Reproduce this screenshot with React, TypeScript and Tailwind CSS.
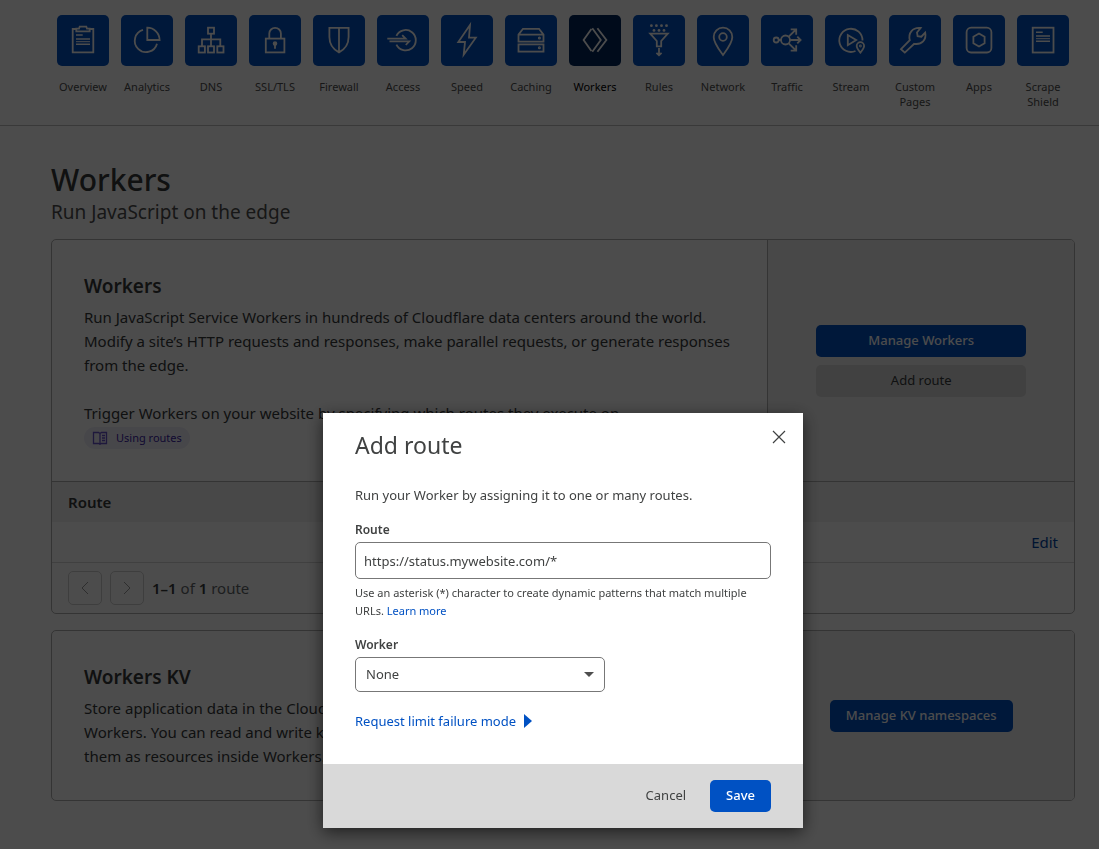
import React, { useState } from "react";

type NavItem = { label: string; icon: React.ReactNode; active?: boolean };

const navItems: NavItem[] = [
  {
    label: "Overview",
    icon: (
      <>
        <path d="M19 14H15.7V37.3H36.3V14H33" />
        <path d="M19.3 16.3V13.7H22L22.7 11.7H29.3L30 13.7H32.7V16.3Z" />
        <path d="M19 20H25.7M19 24H33M19 29.3H33" strokeWidth="1.6" />
        <path d="M19 26.7H33" strokeWidth="1" />
      </>
    ),
  },
  {
    label: "Analytics",
    icon: (
      <>
        <path d="M26.3 12.7V25H38.6A12.3 12.3 0 0 0 26.3 12.7Z" />
        <path d="M22 14.9A11.3 11.3 0 1 0 36 28.7" />
      </>
    ),
  },
  {
    label: "DNS",
    icon: (
      <>
        <rect x="23" y="12.7" width="6" height="6" />
        <path d="M26 18.7V31M17 31V24.3H35.3V31" />
        <rect x="13.7" y="31.3" width="6.2" height="6.2" />
        <rect x="23" y="31.3" width="6" height="6.2" />
        <rect x="32.3" y="31.3" width="6.2" height="6.2" />
      </>
    ),
  },
  {
    label: "SSL/TLS",
    icon: (
      <>
        <rect x="16.8" y="23.6" width="18.6" height="13.8" />
        <path d="M20.3 23.3V18.6A5.8 5.8 0 0 1 31.9 18.6V23.3" />
        <circle cx="26" cy="28.6" r="1.4" fill="currentColor" />
        <path d="M26 29V33.7" />
      </>
    ),
  },
  {
    label: "Firewall",
    icon: <path d="M16.4 12.8H35.6V22C35.6 29.5 31.5 34.5 26 37.4C20.5 34.5 16.4 29.5 16.4 22ZM26 12.8V37" />,
  },
  {
    label: "Access",
    icon: (
      <>
        <path d="M19.4 20.8A10.2 10.2 0 1 1 19.4 29.6" />
        <path d="M10.3 23.6H28.6L25.2 20.2M12.5 26.4H32.2L28.8 30" />
      </>
    ),
  },
  { label: "Speed", icon: <path d="M29 10L17.3 27H24L22.7 39.8L34.8 22.7H28Z" /> },
  {
    label: "Caching",
    icon: (
      <>
        <path d="M13.5 19.6L18 13.8H34L38.5 19.6V26.6H13.5ZM13.5 19.6H38.5" />
        <rect x="13.5" y="29.4" width="25" height="7.2" />
        <circle cx="34.4" cy="23" r="0.6" />
        <circle cx="34.4" cy="32.8" r="0.6" />
      </>
    ),
  },
  {
    label: "Workers",
    active: true,
    icon: <path d="M22.4 14L14.6 25L22.4 36M23.3 13.3L31.8 25L23.3 36.7M28.4 13.3L37.4 25L28.4 36.7" />,
  },
  {
    label: "Rules",
    icon: (
      <>
        <path d="M17.2 18.7H34.8L28.2 26V31.3H23.8V26ZM26 33V40M23.4 37.8L26 40.2L28.6 37.8" />
        <g fill="currentColor" stroke="none">
          <circle cx="18.4" cy="10.7" r="1.4" />
          <circle cx="23.4" cy="10.7" r="1.4" />
          <circle cx="28.5" cy="10.7" r="1.4" />
          <circle cx="33.5" cy="10.7" r="1.4" />
          <circle cx="21" cy="15.4" r="1.4" />
          <circle cx="26" cy="15.4" r="1.4" />
          <circle cx="31" cy="15.4" r="1.4" />
        </g>
      </>
    ),
  },
  {
    label: "Network",
    icon: (
      <>
        <path d="M26 40C22 34.5 16.7 28 16.7 22A9.3 9.3 0 0 1 35.3 22C35.3 28 30 34.5 26 40Z" />
        <circle cx="26" cy="22" r="3.8" />
      </>
    ),
  },
  {
    label: "Traffic",
    icon: (
      <>
        <circle cx="15.2" cy="25" r="2.5" />
        <circle cx="24.5" cy="25" r="4.5" />
        <path d="M17.7 25H20M29 25H39.4M36.3 21.7L39.6 25L36.3 28.3M27.7 21.7L35 14.5M29.7 14.3H35.2V19.8M27.7 28.3L35 35.5M29.7 35.7H35.2V30.2" />
      </>
    ),
  },
  {
    label: "Stream",
    icon: (
      <>
        <path d="M30.5 36A11.6 11.6 0 1 1 37.5 25.5" />
        <path d="M22.8 20V30.2L31.2 25.1Z" />
        <path d="M35.4 37.6C33.4 35 31.7 33 31.7 30.9A3.7 3.7 0 0 1 39.1 30.9C39.1 33 37.4 35 35.4 37.6Z" />
        <circle cx="35.4" cy="31" r="0.5" />
      </>
    ),
  },
  {
    label: "Custom Pages",
    icon: (
      <path d="M12 34.2L20.8 25.2C19 18 23.5 12.2 31.6 13L28 17.4L28.6 21.2L32.3 21.7L36.2 17.6C37.7 24.6 32.8 30 25.2 28.8L15.8 37.6Z" />
    ),
  },
  {
    label: "Apps",
    icon: (
      <>
        <rect x="13.6" y="12.7" width="24.8" height="24.8" rx="4.5" />
        <path d="M26 18.5L31.6 21.7V28.3L26 31.5L20.4 28.3V21.7Z" />
      </>
    ),
  },
  {
    label: "Scrape Shield",
    icon: (
      <>
        <rect x="15.7" y="12.7" width="20.8" height="24.8" />
        <path d="M19 17.3H25.7M19 21H33M19 26.3H33" strokeWidth="1.6" />
        <path d="M19 23.7H33" strokeWidth="1" />
      </>
    ),
  },
];

function TopNav() {
  return (
    <nav className="border-b border-[#c0c0c0] pt-[15px] pr-6 pb-[14px] pl-[51px]">
      <ul className="flex">
        {navItems.map((item) => (
          <li key={item.label} className="w-16 shrink-0">
            <a href="#" className="flex flex-col items-center gap-[13px]">
              <span
                className={
                  item.active
                    ? "h-[51px] w-[52px] rounded-[5px] bg-[#00265c] text-white"
                    : "h-[51px] w-[52px] rounded-[5px] bg-[#0051c3] text-white"
                }
              >
                <svg viewBox="0 0 52 51" className="h-full w-full" fill="none" stroke="currentColor" strokeWidth="1.8" aria-hidden="true">
                  {item.icon}
                </svg>
              </span>
              <span
                className={
                  item.active
                    ? "h-8 text-center text-[11px] leading-[15px] text-black"
                    : "h-8 text-center text-[11px] leading-[15px] text-[#4e4e4e]"
                }
              >
                {item.label}
              </span>
            </a>
          </li>
        ))}
      </ul>
    </nav>
  );
}

function WorkersCard() {
  return (
    <section className="overflow-hidden rounded-[5px] border border-[#b0b0b0]">
      <div className="flex border-b border-[#b0b0b0]">
        <div className="flex-1 p-8">
          <h2 className="text-[19px] leading-7 font-semibold text-[#36393a]">Workers</h2>
          <p className="mt-[5px] text-[15px] leading-6 text-[#36393a]">
            Run JavaScript Service Workers in hundreds of Cloudflare data centers around the world. Modify a site’s HTTP
            requests and responses, make parallel requests, or generate responses from the edge.
          </p>
          <p className="mt-6 text-[15px] leading-6 text-[#36393a]">
            Trigger Workers on your website by specifying which routes they execute on.
          </p>
          <a
            href="#"
            className="mt-0.5 flex h-[22px] w-fit items-center gap-2 rounded-full bg-[#efedf9] px-2 text-[11px] text-[#3b1fa5]"
          >
            <svg viewBox="0 0 16 16" className="h-4 w-4" fill="none" stroke="#6650c8" strokeWidth="1.3" aria-hidden="true">
              <path d="M1.5 2.5H6.5L8 3.5L9.5 2.5H14.5V13.5H9.5L8 14.2L6.5 13.5H1.5ZM8 3.5V14M10 5.5H13M10 8H13M10 10.5H13" />
            </svg>
            Using routes
          </a>
        </div>
        <div className="flex w-[30%] flex-col justify-center gap-2 border-l border-[#b0b0b0] bg-[#f2f2f2] px-12">
          <button type="button" className="h-8 rounded-[5px] bg-[#0051c3] text-[13px] font-medium text-white">
            Manage Workers
          </button>
          <button type="button" className="h-8 rounded-[5px] bg-[#d9d9d9] text-[13px] text-[#36393a]">
            Add route
          </button>
        </div>
      </div>
      <table className="w-full text-[15px]">
        <thead>
          <tr className="h-10 bg-[#f2f2f2] text-left text-[#36393a]">
            <th scope="col" className="px-4 font-semibold">
              Route
            </th>
            <td />
          </tr>
        </thead>
        <tbody>
          <tr className="h-10">
            <td className="px-4" />
            <td className="px-4 text-right">
              <a href="#" className="text-[#0045a6]">
                Edit
              </a>
            </td>
          </tr>
        </tbody>
      </table>
      <div className="flex h-[51px] items-center gap-2 border-t border-[#d5d5d5] px-4 text-[15px] text-[#62676a]">
        <button type="button" aria-label="Previous page" className="flex h-[34px] w-[34px] items-center justify-center rounded-[5px] border border-[#d0d0d0] text-[#999]">
          <svg viewBox="0 0 14 14" className="h-3.5 w-3.5" fill="none" stroke="currentColor" aria-hidden="true">
            <path d="M10 1L4 7L10 13" />
          </svg>
        </button>
        <button type="button" aria-label="Next page" className="flex h-[34px] w-[34px] items-center justify-center rounded-[5px] border border-[#d0d0d0] text-[#999]">
          <svg viewBox="0 0 14 14" className="h-3.5 w-3.5" fill="none" stroke="currentColor" aria-hidden="true">
            <path d="M4 1L10 7L4 13" />
          </svg>
        </button>
        <p>
          <b className="font-semibold text-[#36393a]">1–1</b> of <b className="font-semibold text-[#36393a]">1</b> route
        </p>
      </div>
    </section>
  );
}

function KvCard() {
  return (
    <section className="mt-4 flex overflow-hidden rounded-[5px] border border-[#b0b0b0]">
      <div className="flex-1 p-8">
        <h2 className="text-[19px] leading-7 font-semibold text-[#36393a]">Workers KV</h2>
        <p className="mt-[5px] text-[15px] leading-6 text-[#36393a]">
          Store application data in the Cloudflare network and access it from your
          <br />
          Workers. You can read and write keys from the API, or bind
          <br />
          them as resources inside Workers.
        </p>
      </div>
      <div className="flex w-[30%] items-center justify-center border-l border-[#b0b0b0] bg-[#f2f2f2]">
        <button type="button" className="h-8 rounded-[5px] bg-[#0051c3] px-4 text-[13px] font-medium text-white">
          Manage KV namespaces
        </button>
      </div>
    </section>
  );
}

function AddRouteDialog() {
  const [route, setRoute] = useState("https://status.mywebsite.com/*");
  return (
    <div className="fixed inset-0 overflow-hidden bg-black/70 pt-[413px] pl-[27px]">
      <div
        role="dialog"
        aria-modal="true"
        aria-labelledby="dialog-title"
        className="mx-auto max-w-[480px] bg-white text-[13px] text-[#404242] shadow-[0_4px_16px_rgba(0,0,0,0.6)]"
      >
        <div className="px-8 pt-4 pb-[34px]">
          <div className="flex items-start justify-between">
            <h2 id="dialog-title" className="text-[23px] leading-8">
              Add route
            </h2>
            <button type="button" aria-label="Close" className="-mt-1 -mr-5 p-1">
              <svg viewBox="0 0 16 16" className="h-4 w-4" fill="none" stroke="currentColor" strokeWidth="1.2" aria-hidden="true">
                <path d="M2 2L14 14M14 2L2 14" />
              </svg>
            </button>
          </div>
          <p className="mt-6 leading-5">Run your Worker by assigning it to one or many routes.</p>
          <label htmlFor="route" className="mt-4 block text-[12px] leading-[18px] font-semibold">
            Route
          </label>
          <input
            id="route"
            type="text"
            value={route}
            onChange={(event) => setRoute(event.target.value)}
            className="mt-[3px] block h-[37px] w-full rounded-[5px] border border-[#777] px-2"
          />
          <p className="mt-[5px] text-[11px] leading-[18px]">
            Use an asterisk (*) character to create dynamic patterns that match multiple URLs.{" "}
            <a href="#" className="text-[#0051c3]">
              Learn more
            </a>
          </p>
          <label htmlFor="worker" className="mt-4 block text-[12px] leading-[18px] font-semibold">
            Worker
          </label>
          <div className="relative mt-[3px] w-[250px]">
            <select id="worker" className="block h-[35px] w-full appearance-none rounded-[5px] border border-[#777] bg-white px-2.5">
              <option>None</option>
            </select>
            <svg viewBox="0 0 10 5" className="pointer-events-none absolute top-[15px] right-[11px] h-[5px] w-2.5" aria-hidden="true">
              <path d="M0 0H10L5 5Z" fill="#4e4e4e" />
            </svg>
          </div>
          <button type="button" className="mt-5 flex items-center gap-2 leading-[18px] text-[#0051c3]">
            Request limit failure mode
            <svg viewBox="0 0 8 14" className="h-3.5 w-2" aria-hidden="true">
              <path d="M0 0L8 7L0 14Z" fill="currentColor" />
            </svg>
          </button>
        </div>
        <div className="flex h-16 items-center justify-end gap-2 bg-[#d9d9d9] px-8">
          <button type="button" className="h-8 px-4">
            Cancel
          </button>
          <button type="button" className="h-8 rounded-[5px] bg-[#0051c3] px-4 font-medium text-white">
            Save
          </button>
        </div>
      </div>
    </div>
  );
}

export default function App() {
  return (
    <div className="overflow-x-hidden bg-white font-['Noto_Sans','Open_Sans',sans-serif]">
      <TopNav />
      <main className="pt-8 pr-6 pb-12 pl-[51px]">
        <h1 className="text-[30px] leading-11 font-medium text-[#36393a]">Workers</h1>
        <p className="mb-[17px] text-[19px] leading-5 text-[#4e4e4e]">Run JavaScript on the edge</p>
        <WorkersCard />
        <KvCard />
      </main>
      <AddRouteDialog />
    </div>
  );
}
